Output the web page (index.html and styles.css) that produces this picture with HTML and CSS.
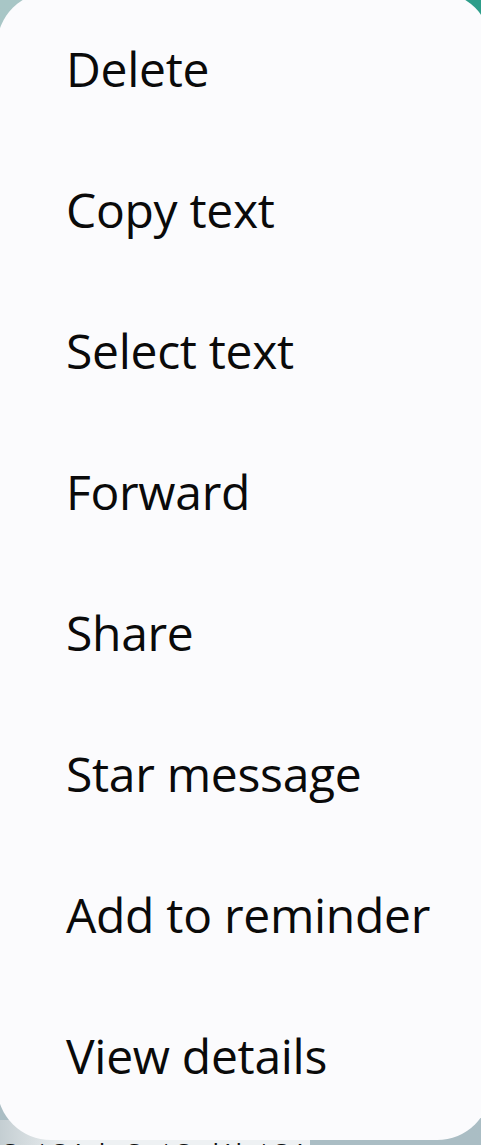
FILE: index.html
```html
<!DOCTYPE html>
<html lang="en">
<head>
<meta charset="utf-8">
<title>Message options</title>
<link rel="stylesheet" href="styles.css">
</head>
<body>
<div class="screen">
  <div class="menu">
    <div class="item">Delete</div>
    <div class="item">Copy text</div>
    <div class="item">Select text</div>
    <div class="item">Forward</div>
    <div class="item">Share</div>
    <div class="item">Star message</div>
    <div class="item">Add to reminder</div>
    <div class="item">View details</div>
  </div>
  <div class="below">
    <div class="bubble">O ‘O’ l O ‘O l’l ‘O’ l</div>
  </div>
</div>
</body>
</html>
```

FILE: styles.css
```css
html, body {
  margin: 0;
  padding: 0;
}
body {
  width: 481px;
  height: 1145px;
  overflow: hidden;
}
.screen {
  width: 481px;
  height: 1145px;
  overflow: hidden;
  background:
    radial-gradient(circle at 100% 0, #2d9d8a 0 40px, transparent 41px),
    linear-gradient(to bottom, #a8c6c6 0%, #aabdc4 100%);
}
.menu {
  margin: -8px -10px 0 -3px;
  padding: 6px 0 14px 0;
  background: #fbfbfd;
  border-radius: 54px;
  position: relative;
  z-index: 1;
}
.item {
  height: 141px;
  line-height: 141px;
  padding-left: 69px;
  font-family: "Open Sans", "Noto Sans", sans-serif;
  font-size: 48px;
  letter-spacing: -0.3px;
  color: #0a0a0a;
  white-space: nowrap;
}
.below {
  margin-top: -20px;
  height: 40px;
  display: flex;
}
.bubble {
  width: 310px;
  padding: 19px 0 0 0;
  background: linear-gradient(to right, #c4ced2, #eef1f3 22%, #eef1f3);
  font-family: "Open Sans", sans-serif;
  font-size: 26px;
  line-height: 26px;
  letter-spacing: 6px;
  color: #111111;
  white-space: nowrap;
  overflow: hidden;
}
```
